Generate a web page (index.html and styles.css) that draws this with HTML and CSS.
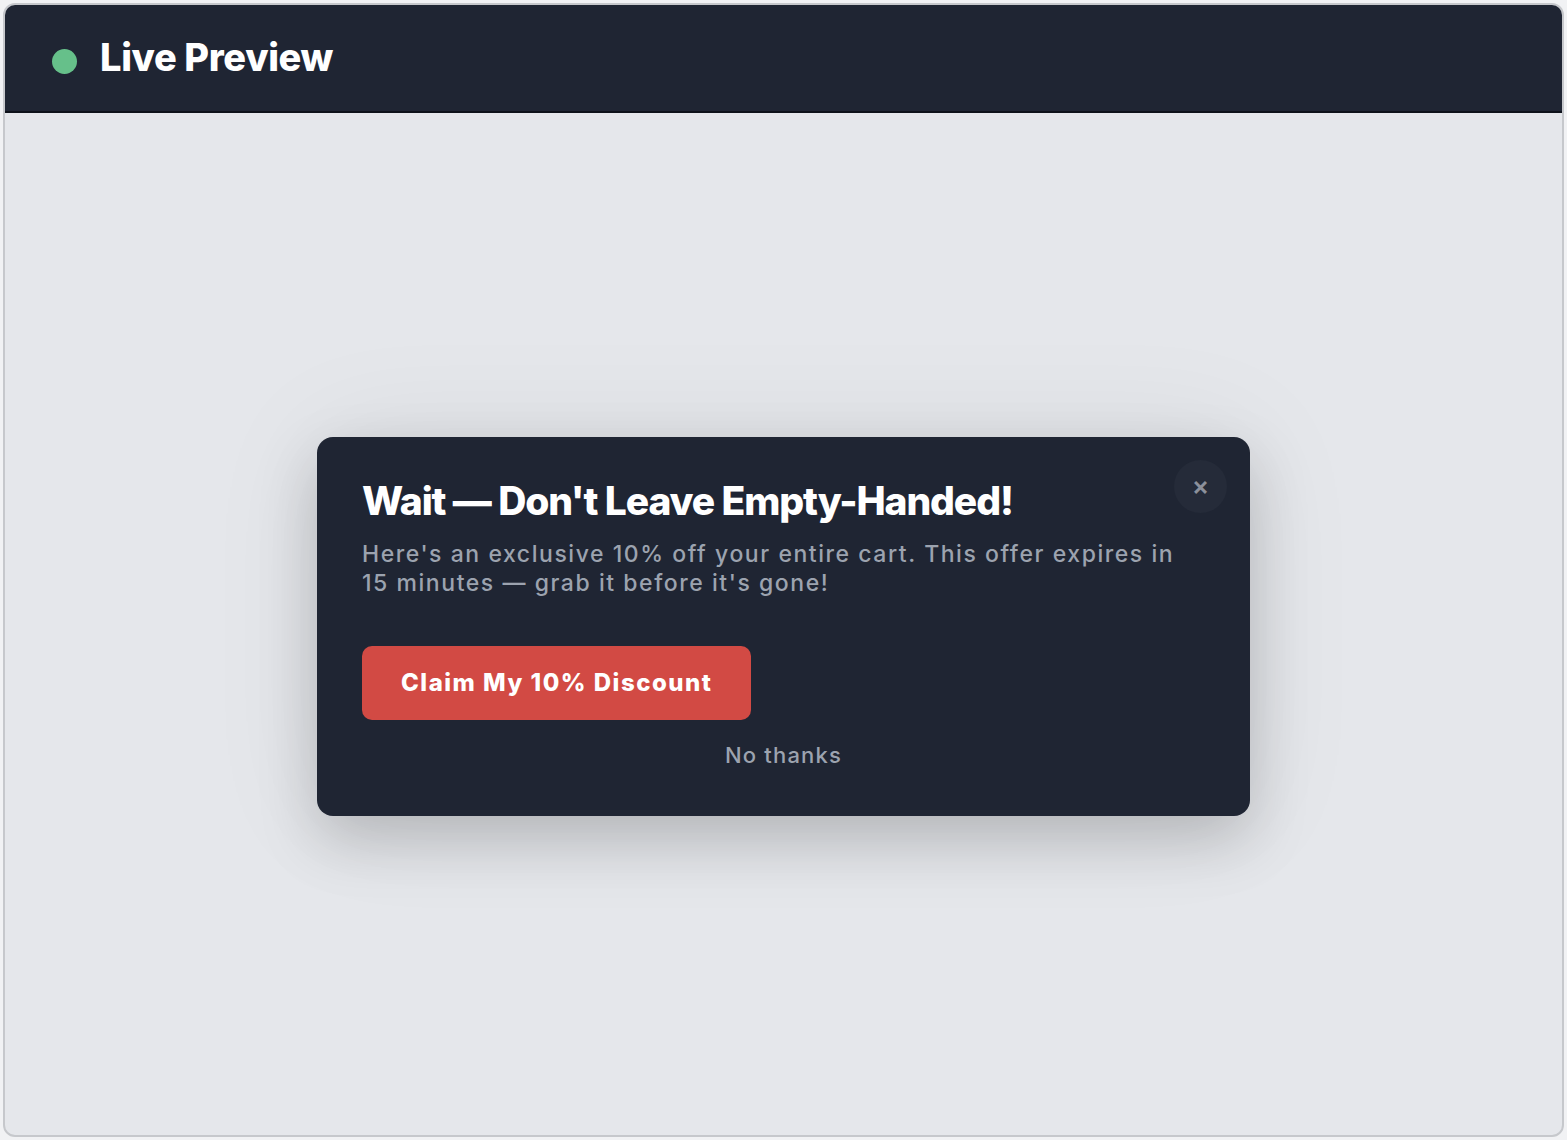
FILE: index.html
```html
<!DOCTYPE html>
<html lang="en">
<head>
<meta charset="utf-8">
<title>Live Preview</title>
<link rel="stylesheet" href="styles.css">
</head>
<body>
<div class="frame">
  <header class="bar">
    <span class="dot"></span>
    <h1 class="bar-title">Live Preview</h1>
  </header>
  <main class="stage">
    <div class="popup">
      <button class="close" aria-label="Close">×</button>
      <h2 class="popup-title">Wait — Don't Leave Empty-Handed!</h2>
      <p class="popup-text">Here's an exclusive 10% off your entire cart. This offer expires in 15 minutes — grab it before it's gone!</p>
      <button class="cta">Claim My 10% Discount</button>
      <div class="decline">No thanks</div>
    </div>
  </main>
</div>
</body>
</html>
```
FILE: styles.css
```css
* { box-sizing: border-box; }
html, body { margin: 0; padding: 0; }
body {
  background: #f1f2f4;
  font-family: Inter, "Noto Sans", sans-serif;
  padding: 3px;
  height: 1140px;
}
.frame {
  height: 1134px;
  border: 2px solid #c6c8cc;
  border-radius: 12px;
  overflow: hidden;
  background: #e5e7eb;
  display: flex;
  flex-direction: column;
}
.bar {
  height: 108px;
  flex: none;
  background: #1f2533;
  border-bottom: 2px solid #0e121a;
  display: flex;
  align-items: flex-start;
  padding: 33px 0 0 47px;
  gap: 23px;
}
.dot {
  width: 25px;
  height: 25px;
  border-radius: 50%;
  background: #66c08a;
  margin-top: 11px;
}
.bar-title {
  margin: 0;
  color: #ffffff;
  font-size: 38px;
  font-weight: 800;
  letter-spacing: -0.35px;
  line-height: 38px;
}
.stage {
  flex: 1;
  display: flex;
  align-items: center;
  justify-content: center;
  padding-top: 4px;
}
.popup {
  position: relative;
  width: 933px;
  background: #1f2533;
  border-radius: 16px;
  padding: 40px 45px 47px;
  box-shadow: 0 24px 60px rgba(0, 0, 0, 0.18), 0 0 120px rgba(0, 0, 0, 0.07);
  display: flex;
  flex-direction: column;
}
.close {
  position: absolute;
  top: 23px;
  right: 23px;
  width: 53px;
  height: 53px;
  border-radius: 50%;
  border: none;
  background: #252b39;
  color: #8b909b;
  font-size: 26px;
  font-weight: 600;
  line-height: 1;
  font-family: Inter, sans-serif;
  padding: 0;
}
.popup-title {
  margin: 0;
  color: #ffffff;
  font-size: 39px;
  font-weight: 800;
  letter-spacing: -1.1px;
  line-height: 48px;
}
.popup-text {
  margin: 15px 0 0;
  color: #9ca3af;
  font-size: 23px;
  font-weight: 500;
  letter-spacing: 1.55px;
  line-height: 29px;
  max-width: 830px;
}
.cta {
  align-self: flex-start;
  margin-top: 48px;
  height: 74px;
  padding: 0 39px;
  border: none;
  border-radius: 10px;
  background: #d24a44;
  color: #ffffff;
  font-family: Inter, sans-serif;
  font-size: 24px;
  font-weight: 800;
  letter-spacing: 1.5px;
}
.decline {
  margin-top: 21px;
  text-align: center;
  color: #9ca3af;
  font-size: 22px;
  font-weight: 500;
  letter-spacing: 1.2px;
  line-height: 28px;
}
```
